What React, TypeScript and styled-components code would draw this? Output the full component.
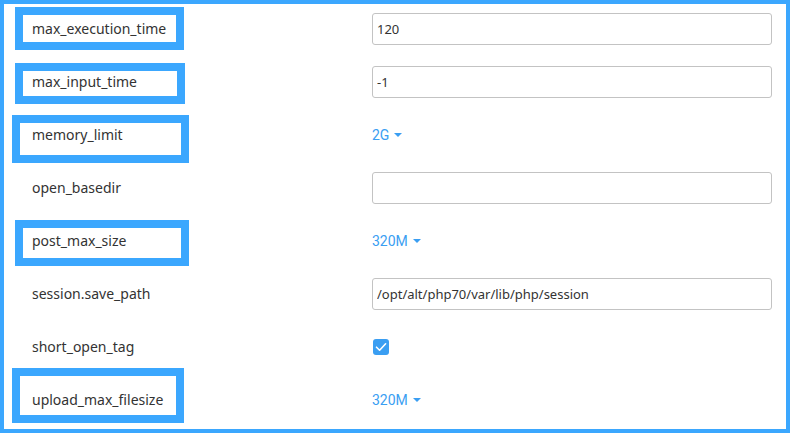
import React from "react";
import styled, { createGlobalStyle } from "styled-components";

const GlobalStyle = createGlobalStyle`
  html, body {
    margin: 0;
    padding: 0;
    background: #ffffff;
  }
  body {
    font-family: "Noto Sans", "Open Sans", sans-serif;
  }
`;

type Mark = { x: number; y: number; w: number; h: number };

type Option =
  | { name: string; kind: "text"; value: string; mark?: Mark }
  | { name: string; kind: "select"; value: string; mark?: Mark }
  | { name: string; kind: "check"; value: boolean; mark?: Mark };

const options: Option[] = [
  { name: "max_execution_time", kind: "text", value: "120", mark: { x: 11, y: 5, w: 169, h: 43 } },
  { name: "max_input_time", kind: "text", value: "-1", mark: { x: 11, y: 8, w: 170, h: 41 } },
  { name: "memory_limit", kind: "select", value: "2G", mark: { x: 8, y: 7, w: 177, h: 48 } },
  { name: "open_basedir", kind: "text", value: "" },
  { name: "post_max_size", kind: "select", value: "320M", mark: { x: 11, y: 6, w: 174, h: 46 } },
  { name: "session.save_path", kind: "text", value: "/opt/alt/php70/var/lib/php/session" },
  { name: "short_open_tag", kind: "check", value: true },
  { name: "upload_max_filesize", kind: "select", value: "320M", mark: { x: 8, y: -5, w: 172, h: 55 } },
];

const App: React.FC = () => {
  return (
    <>
      <GlobalStyle />
      <Frame>
        <OptionList>
          {options.map((opt) => (
            <Row key={opt.name}>
              {opt.mark && <Highlight $mark={opt.mark} />}
              <Label>{opt.name}</Label>
              <Value>
                {opt.kind === "text" && (
                  <TextInput type="text" defaultValue={opt.value} />
                )}
                {opt.kind === "select" && (
                  <Dropdown type="button">
                    {opt.value}
                    <Caret />
                  </Dropdown>
                )}
                {opt.kind === "check" && (
                  <CheckBox aria-checked={opt.value} role="checkbox">
                    <svg width="12" height="10" viewBox="0 0 12 10">
                      <path
                        d="M1.5 5.2 L4.6 8.2 L10.6 1.8"
                        fill="none"
                        stroke="#ffffff"
                        strokeWidth="1.6"
                        strokeLinecap="round"
                        strokeLinejoin="round"
                      />
                    </svg>
                  </CheckBox>
                )}
              </Value>
            </Row>
          ))}
        </OptionList>
      </Frame>
    </>
  );
};

export default App;

const Frame = styled.div`
  width: 790px;
  height: 433px;
  box-sizing: border-box;
  border: 4px solid #3ba7fe;
  overflow: hidden;
  background: #ffffff;
`;

const OptionList = styled.div`
  display: flex;
  flex-direction: column;
  margin-top: -2px;
`;

const Row = styled.div`
  position: relative;
  display: grid;
  grid-template-columns: 368px 400px;
  align-items: center;
  height: 53px;
`;

const Highlight = styled.div<{ $mark: Mark }>`
  position: absolute;
  left: ${({ $mark }) => $mark.x}px;
  top: ${({ $mark }) => $mark.y}px;
  width: ${({ $mark }) => $mark.w}px;
  height: ${({ $mark }) => $mark.h}px;
  box-sizing: border-box;
  border: 8px solid #3ba7fe;
  pointer-events: none;
`;

const Label = styled.div`
  padding-left: 28px;
  font-size: 14px;
  color: #333333;
`;

const Value = styled.div`
  display: flex;
  align-items: center;
`;

const TextInput = styled.input`
  width: 400px;
  height: 32px;
  box-sizing: border-box;
  border: 1px solid #c3c3c3;
  border-radius: 3px;
  padding: 0 4px;
  font-family: "Noto Sans", "Open Sans", sans-serif;
  font-size: 13px;
  color: #333333;
  outline: none;
`;

const Dropdown = styled.button`
  display: inline-flex;
  align-items: center;
  gap: 5px;
  border: none;
  background: none;
  padding: 0;
  font-family: Roboto, "Noto Sans", sans-serif;
  font-size: 14px;
  color: #3a9ef2;
  cursor: pointer;
`;

const Caret = styled.span`
  width: 0;
  height: 0;
  border-left: 4px solid transparent;
  border-right: 4px solid transparent;
  border-top: 4px solid #3a9ef2;
  margin-top: 1px;
`;

const CheckBox = styled.span`
  display: inline-flex;
  align-items: center;
  justify-content: center;
  width: 16px;
  height: 16px;
  margin-left: 1px;
  border-radius: 3px;
  background: #3a9ef2;
`;
